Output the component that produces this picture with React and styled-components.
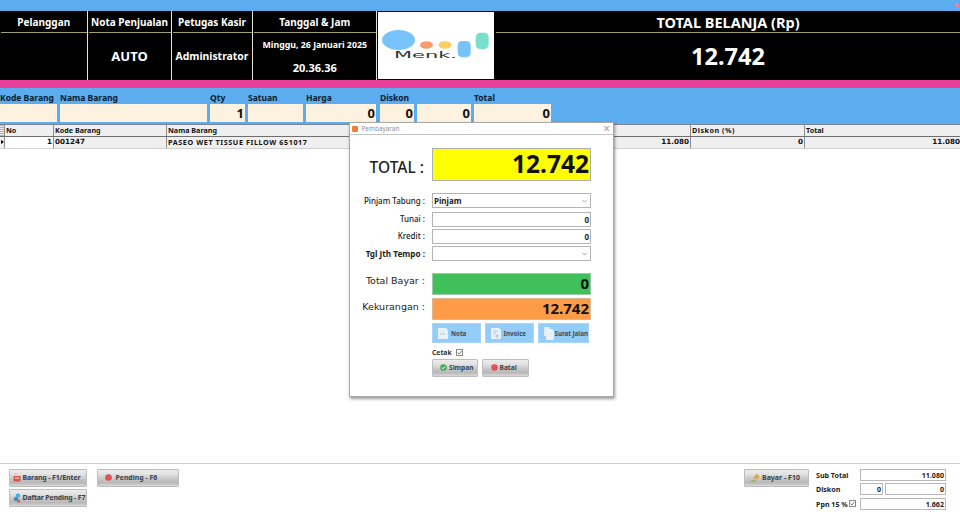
import React from 'react';
import styled, { createGlobalStyle } from 'styled-components';

const Global = createGlobalStyle`
  html, body { margin: 0; padding: 0; background: #fff; }
  body { font-family: "Noto Sans", "DejaVu Sans", sans-serif; color: #000; overflow: hidden; }
  * { box-sizing: border-box; }
  svg { flex: none; }
`;

const NUM = '"DejaVu Sans", sans-serif';

const Page = styled.div`
  position: relative;
  width: 960px;
  height: 519px;
  display: flex;
  flex-direction: column;
  overflow: hidden;
  background: #fff;
`;

const TopStrip = styled.div`
  height: 11px;
  background: #5cadef;
  display: flex;
  justify-content: flex-end;
  align-items: flex-start;
  padding: 3px 1px 0 0;
`;

const CloseDot = styled.span`
  width: 4px;
  height: 4px;
  border-radius: 1px;
  background: #ee7fae;
`;

const Header = styled.div`
  height: 69px;
  background: #000;
  display: grid;
  grid-template-columns: 87.5px 84px 81px 124.5px 118px 1fr;
`;

const HeadCol = styled.div`
  display: flex;
  flex-direction: column;
  border-right: ${p => (p.$last ? 0 : '1px solid #e4e4dc')};
  padding-left: 1px;
  color: #fff;
  font-weight: 700;
`;

const HeadTitle = styled.div`
  height: 21.5px;
  flex: none;
  display: flex;
  align-items: center;
  justify-content: center;
  font-size: ${p => p.$size || 10}px;
  white-space: nowrap;
  border-bottom: 1px solid #a3a06b;
  padding-top: 1px;
`;

const HeadValue = styled.div`
  flex: 1;
  display: flex;
  flex-direction: column;
  align-items: center;
  justify-content: center;
  font-size: ${p => p.$size || 10.4}px;
  white-space: nowrap;
`;

const DateLine = styled.div`
  font-size: 8.8px;
  margin-bottom: 9px;
  margin-top: 1px;
  line-height: 13px;
`;

const TimeLine = styled.div`
  font-size: 11px;
  line-height: 13px;
`;

const LogoCell = styled.div`
  background: #fff;
  margin: 1px 0 1px 1px;
  border-right: 1px solid #000;
  display: flex;
`;

const PinkBar = styled.div`
  height: 8px;
  background: #e8409a;
`;

const Form = styled.div`
  height: 36px;
  background: #5cadef;
  padding-top: 5px;
  display: flex;
  align-items: flex-start;
`;

const Field = styled.div`
  width: ${p => p.$w}px;
  margin-right: ${p => p.$gap ?? 3}px;
  display: flex;
  flex-direction: column;
`;

const FieldLabel = styled.div`
  height: 10px;
  line-height: 10px;
  font-size: 8.5px;
  font-weight: 700;
  white-space: nowrap;
  color: #0a1a30;
`;

const FieldBox = styled.div`
  height: 18px;
  margin-top: 1px;
  background: #fdf1e0;
  text-align: right;
  font-size: 13px;
  font-weight: 700;
  line-height: 18px;
  padding-right: 1px;
  color: #111;
`;

const Table = styled.div`
  border-top: 1px solid #7a8590;
  font-size: 7.2px;
  font-weight: 700;
`;

const Row = styled.div`
  display: grid;
  grid-template-columns: 5px 49px 113px 1fr 79px 114px 155px;
  height: ${p => (p.$head ? 11.5 : 12)}px;
  background: #efefef;
  border-bottom: 1px solid ${p => (p.$head ? '#6e6e6e' : '#d0d0d0')};
`;

const Cell = styled.div`
  border-right: ${p => (p.$end ? 0 : '1px solid #8e8e8e')};
  line-height: 10px;
  padding: ${p => (p.$end ? '0 0 0 1px' : '0 1px')};
  white-space: nowrap;
  overflow: hidden;
  text-align: ${p => (p.$right ? 'right' : 'left')};
  background: ${p => (p.$white ? '#fff' : 'transparent')};
  font-family: ${p => (p.$num ? NUM : 'inherit')};
  letter-spacing: ${p => p.$ls || 0}px;
  color: #111;
`;

const Indicator = styled(Cell)`
  display: flex;
  align-items: center;
  justify-content: center;
  padding: 0;
  background: ${p => (p.$arrow ? 'transparent' : 'repeating-linear-gradient(#b5b5b5 0 1px, #e8e8e8 1px 2px)')};
  &::before {
    content: "";
    border-left: 3px solid #000;
    border-top: 2px solid transparent;
    border-bottom: 2px solid transparent;
    display: ${p => (p.$arrow ? 'block' : 'none')};
  }
`;

const Spacer = styled.div`
  flex: 1;
`;

const Footer = styled.div`
  height: 56px;
  border-top: 1px solid #cfcfcf;
  display: flex;
  padding: 5px 14px 0 9px;
`;

const FootLeft = styled.div`
  display: grid;
  grid-template-columns: 78px 82px;
  grid-auto-rows: 18px;
  row-gap: 2px;
  column-gap: 10px;
`;

const GrayButton = styled.div`
  width: ${p => p.$w}px;
  height: ${p => p.$h || 18}px;
  display: flex;
  align-items: center;
  gap: ${p => p.$gap ?? 2}px;
  padding-left: ${p => p.$pad ?? 3}px;
  padding-bottom: 1px;
  font-size: ${p => p.$size || 7}px;
  font-weight: 700;
  letter-spacing: ${p => p.$ls || 0}px;
  white-space: nowrap;
  color: #39414d;
  border: 1px solid #bdbdbd;
  border-radius: 1px;
  background: linear-gradient(#ececec 0%, #e2e2e2 25%, #c4c4c4 60%, #b8b8b8 80%, #d8d8d8 100%);
`;

const FootRight = styled.div`
  margin-left: auto;
  display: flex;
  align-items: flex-start;
`;

const Totals = styled.div`
  width: 130px;
  margin-left: 7px;
  display: grid;
  grid-template-columns: 44px 86px;
  grid-auto-rows: 12px;
  row-gap: 2.3px;
  align-items: center;
  font-size: 7.1px;
  font-weight: 700;
  color: #222;
`;

const TotalLabel = styled.div`
  display: flex;
  align-items: center;
  gap: 1.5px;
  white-space: nowrap;
`;

const TotalInputs = styled.div`
  display: flex;
  gap: 2px;
  height: 12px;
`;

const TotalBox = styled.div`
  flex: ${p => (p.$w ? `0 0 ${p.$w}px` : 1)};
  border: 1px solid #b8b8b8;
  background: #fff;
  text-align: right;
  line-height: 10px;
  padding-right: 1px;
`;

const Check = styled.span`
  width: 7px;
  height: 7px;
  border: 1px solid #8a8a8a;
  background: #fff;
  display: inline-flex;
  flex: none;
  & svg { display: block; }
`;

const Modal = styled.div`
  position: absolute;
  left: 349px;
  top: 122px;
  width: 265px;
  height: 275px;
  background: #fff;
  border: 1px solid #a8a8a8;
  box-shadow: 1px 2px 3px rgba(0, 0, 0, 0.4);
  display: flex;
  flex-direction: column;
`;

const ModalTitle = styled.div`
  height: 12px;
  flex: none;
  border-bottom: 1px solid #c4c4c4;
  display: flex;
  align-items: center;
  gap: 3.5px;
  padding: 0 3px 0 2px;
  font-size: 6.4px;
  color: #8f8f8f;
`;

const TitleIcon = styled.span`
  width: 6px;
  height: 6px;
  background: #f08030;
  border-radius: 1px;
`;

const TitleClose = styled.span`
  margin-left: auto;
  font-size: 12px;
  line-height: 10px;
  color: #a0a0a0;
`;

const ModalBody = styled.div`
  flex: 1;
  display: flex;
  flex-direction: column;
  padding: 13px 22px 0 0;
`;

const FormRow = styled.div`
  display: grid;
  grid-template-columns: 82px 159px;
  margin-top: ${p => p.$mt || 0}px;
  align-items: center;
`;

const RowLabel = styled.div`
  text-align: right;
  padding-right: ${p => p.$pr ?? 7}px;
  font-size: ${p => p.$size || 8}px;
  font-weight: ${p => (p.$bold ? 700 : 500)};
  font-family: ${p => (p.$num ? NUM : 'inherit')};
  letter-spacing: ${p => p.$ls || 0}px;
  white-space: nowrap;
  color: #222;
  transform: translateY(${p => p.$dy || 0}px);
`;

const BigValue = styled.div`
  height: ${p => p.$h}px;
  background: ${p => p.$bg};
  border: 1px solid ${p => p.$border || '#b0b0b0'};
  text-align: right;
  font-size: ${p => p.$size}px;
  line-height: ${p => p.$h - 3}px;
  font-weight: 700;
  padding-right: 1px;
  color: #111;
`;

const TextInput = styled.div`
  height: 15px;
  border: 1px solid #b4b4b4;
  background: #fff;
  display: flex;
  align-items: center;
  justify-content: ${p => (p.$right ? 'flex-end' : 'space-between')};
  padding: 0 1px;
  font-size: 8px;
  font-weight: 700;
  color: #222;
`;

const Chevron = styled.svg`
  width: 5px;
  height: 4px;
  margin-right: 2px;
`;

const ActionGrid = styled.div`
  display: grid;
  grid-template-columns: 49px 49px 51px;
  column-gap: 4px;
  margin: 3px 0 0 82px;
`;

const ActionTile = styled.div`
  height: 20px;
  background: #94ccf8;
  border: 1px solid #a8d6fa;
  display: flex;
  align-items: center;
  padding-left: 5px;
  gap: ${p => p.$gap ?? 3}px;
  font-size: 6.2px;
  font-weight: 700;
  white-space: nowrap;
  color: #3a4a60;
`;

const CetakRow = styled.div`
  margin: 6px 0 0 82px;
  display: flex;
  align-items: center;
  gap: 4px;
  height: 7px;
  font-size: 6.8px;
  font-weight: 700;
  color: #333;
`;

const ButtonRow = styled.div`
  margin: 3px 0 0 82px;
  display: flex;
  gap: 4px;
`;

const Tick = () => (
  <svg width="5" height="5" viewBox="0 0 5 5"><path d="M.5 2.5 2 4 4.5 1" fill="none" stroke="#5a5a5a" strokeWidth=".8" /></svg>
);

const ChevronIcon = () => (
  <Chevron viewBox="0 0 5 4"><path d="M.5 1 2.5 3 4.5 1" fill="none" stroke="#8a8a8a" strokeWidth=".8" /></Chevron>
);

const RoundIcon = ({ color, check }) => (
  <svg width="7" height="7" viewBox="0 0 7 7">
    <circle cx="3.5" cy="3.5" r="3.3" fill={color} />
    {check && <path d="M1.8 3.6 3 4.8 5.2 2.3" fill="none" stroke="#fff" strokeWidth="1" />}
  </svg>
);

const DocIcon = ({ stack, magnify }) => (
  <svg width="10" height="13" viewBox="0 0 10 13">
    {stack && <path d="M0 0h6v9H0z" fill="#dfeaf4" />}
    <path d={stack ? 'M2 2h6l2 2v9H2z' : 'M0 1h8l2 2v9H0z'} fill="#e9f0f7" />
    {!stack && !magnify && <path d="M2 7h5" stroke="#a9bdd2" strokeWidth=".8" />}
    {magnify && <><path d="M2 4h5M2 6h3" stroke="#a9bdd2" strokeWidth=".7" /><circle cx="6" cy="9" r="1.8" fill="#b8d2e8" /></>}
  </svg>
);

const BoxIcon = () => (
  <svg width="8" height="9" viewBox="0 0 8 9">
    <rect x="1" y="0" width="3" height="3" fill="#f0c9b8" />
    <rect x="0.5" y="3" width="7" height="5.5" fill="#d9564f" />
    <rect x="2" y="4.5" width="4" height="1.2" fill="#f3d5c8" />
  </svg>
);

const PendingIcon = () => (
  <svg width="8" height="10" viewBox="0 0 8 10">
    <circle cx="5" cy="2.6" r="2.2" fill="#3fb0e0" />
    <circle cx="3" cy="6" r="2.2" fill="#3f8fc4" />
    <circle cx="5.6" cy="8" r="1.7" fill="#d9635a" />
  </svg>
);

const PayIcon = () => (
  <svg width="9" height="9" viewBox="0 0 9 9">
    <path d="M5 0.5 8.8 3.2 5.8 6.5 4.8 4.8 2.8 6 2 4.5 4 3.2z" fill="#e0a63a" />
    <rect x="0.5" y="7" width="1.6" height="1.6" fill="#7fb04a" />
    <rect x="3" y="6.8" width="1.6" height="1.8" fill="#7fb04a" />
  </svg>
);

const Logo = () => (
  <svg width="115" height="67" viewBox="0 0 115 67">
    <ellipse cx="20.5" cy="28" rx="16.5" ry="10" fill="#76c4fb" />
    <ellipse cx="48.5" cy="33" rx="6.5" ry="3.8" fill="#f79a6e" />
    <ellipse cx="67" cy="33" rx="6.5" ry="3.8" fill="#fbcd63" />
    <rect x="79.7" y="29" width="13" height="16.3" rx="4.5" fill="#76c4fb" />
    <rect x="97.7" y="20.7" width="13" height="16.3" rx="4.5" fill="#78e0c8" />
    <text x="16" y="45.5" fontFamily="DejaVu Sans, sans-serif" fontSize="8.6" textLength="63" lengthAdjust="spacingAndGlyphs" fill="#333">Menk.</text>
  </svg>
);

export default function App() {
  return (
    <Page>
      <Global />
      <TopStrip><CloseDot /></TopStrip>
      <Header>
        <HeadCol><HeadTitle>Pelanggan</HeadTitle><HeadValue /></HeadCol>
        <HeadCol><HeadTitle>Nota Penjualan</HeadTitle><HeadValue $size={13}>AUTO</HeadValue></HeadCol>
        <HeadCol><HeadTitle>Petugas Kasir</HeadTitle><HeadValue>Administrator</HeadValue></HeadCol>
        <HeadCol>
          <HeadTitle>Tanggal &amp; Jam</HeadTitle>
          <HeadValue>
            <DateLine>Minggu, 26 Januari 2025</DateLine>
            <TimeLine>20.36.36</TimeLine>
          </HeadValue>
        </HeadCol>
        <LogoCell><Logo /></LogoCell>
        <HeadCol $last>
          <HeadTitle $size={14.5}>TOTAL BELANJA (Rp)</HeadTitle>
          <HeadValue $size={23.5}>12.742</HeadValue>
        </HeadCol>
      </Header>
      <PinkBar />
      <Form>
        <Field $w={57}><FieldLabel>Kode Barang</FieldLabel><FieldBox /></Field>
        <Field $w={147}><FieldLabel>Nama Barang</FieldLabel><FieldBox /></Field>
        <Field $w={35}><FieldLabel>Qty</FieldLabel><FieldBox>1</FieldBox></Field>
        <Field $w={55}><FieldLabel>Satuan</FieldLabel><FieldBox /></Field>
        <Field $w={70} $gap={4}><FieldLabel>Harga</FieldLabel><FieldBox>0</FieldBox></Field>
        <Field $w={34}><FieldLabel>Diskon</FieldLabel><FieldBox>0</FieldBox></Field>
        <Field $w={54}><FieldLabel>&nbsp;</FieldLabel><FieldBox>0</FieldBox></Field>
        <Field $w={77}><FieldLabel>Total</FieldLabel><FieldBox>0</FieldBox></Field>
      </Form>
      <Table>
        <Row $head>
          <Indicator />
          <Cell>No</Cell>
          <Cell>Kode Barang</Cell>
          <Cell>Nama Barang</Cell>
          <Cell />
          <Cell $ls={0.5}>Diskon (%)</Cell>
          <Cell $end>Total</Cell>
        </Row>
        <Row>
          <Indicator $arrow />
          <Cell $right $white $num>1</Cell>
          <Cell $num>001247</Cell>
          <Cell $ls={0.6}>PASEO WET TISSUE FILLOW 651017</Cell>
          <Cell $right $num>11.080</Cell>
          <Cell $right $num>0</Cell>
          <Cell $right $num $end>11.080</Cell>
        </Row>
      </Table>
      <Spacer />
      <Footer>
        <FootLeft>
          <GrayButton $w={78} $gap={1.5} $ls={-0.15}><BoxIcon />Barang - F1/Enter</GrayButton>
          <GrayButton $w={82} $pad={7} $gap={3.5} $size={6.9}><RoundIcon color="#e8504f" />Pending - F6</GrayButton>
          <GrayButton $w={78} $gap={1.5} $ls={-0.2}><PendingIcon />Daftar Pending - F7</GrayButton>
        </FootLeft>
        <FootRight>
          <GrayButton $w={65} $pad={6} $gap={2}><PayIcon />Bayar - F10</GrayButton>
          <Totals>
            <TotalLabel>Sub Total</TotalLabel>
            <TotalInputs><TotalBox>11.080</TotalBox></TotalInputs>
            <TotalLabel>Diskon</TotalLabel>
            <TotalInputs><TotalBox $w={23}>0</TotalBox><TotalBox>0</TotalBox></TotalInputs>
            <TotalLabel>Ppn 15 % <Check><Tick /></Check></TotalLabel>
            <TotalInputs><TotalBox>1.662</TotalBox></TotalInputs>
          </Totals>
        </FootRight>
      </Footer>
      <Modal>
        <ModalTitle><TitleIcon />Pembayaran<TitleClose>×</TitleClose></ModalTitle>
        <ModalBody>
          <FormRow>
            <RowLabel $size={15.5} $dy={2} $pr={8}>TOTAL :</RowLabel>
            <BigValue $h={33} $bg="#ffff00" $size={24.5}>12.742</BigValue>
          </FormRow>
          <FormRow $mt={12}>
            <RowLabel>Pinjam Tabung :</RowLabel>
            <TextInput>Pinjam<ChevronIcon /></TextInput>
          </FormRow>
          <FormRow $mt={4}>
            <RowLabel $dy={-1}>Tunai :</RowLabel>
            <TextInput $right>0</TextInput>
          </FormRow>
          <FormRow $mt={2}>
            <RowLabel $dy={-1}>Kredit :</RowLabel>
            <TextInput $right>0</TextInput>
          </FormRow>
          <FormRow $mt={2}>
            <RowLabel $bold $size={8.2}>Tgl Jth Tempo :</RowLabel>
            <TextInput><span /><ChevronIcon /></TextInput>
          </FormRow>
          <FormRow $mt={11.5}>
            <RowLabel $size={9.5} $num $dy={-3}>Total Bayar :</RowLabel>
            <BigValue $h={22} $bg="#3fc05a" $border="#9fc9a8" $size={15}>0</BigValue>
          </FormRow>
          <FormRow $mt={3.5}>
            <RowLabel $size={9.5} $num $dy={-3}>Kekurangan :</RowLabel>
            <BigValue $h={22} $bg="#fd9b47" $border="#d9b896" $size={15}>12.742</BigValue>
          </FormRow>
          <ActionGrid>
            <ActionTile $gap={3}><DocIcon />Nota</ActionTile>
            <ActionTile $gap={2.5}><DocIcon magnify />Invoice</ActionTile>
            <ActionTile $gap={0.5}><DocIcon stack />Surat Jalan</ActionTile>
          </ActionGrid>
          <CetakRow>Cetak <Check><Tick /></Check></CetakRow>
          <ButtonRow>
            <GrayButton $w={46} $pad={7} $gap={2} $size={6.6}><RoundIcon color="#3fae5a" check />Simpan</GrayButton>
            <GrayButton $w={47} $pad={8} $gap={1.5} $size={6.6}><RoundIcon color="#e8504f" />Batal</GrayButton>
          </ButtonRow>
        </ModalBody>
      </Modal>
    </Page>
  );
}
